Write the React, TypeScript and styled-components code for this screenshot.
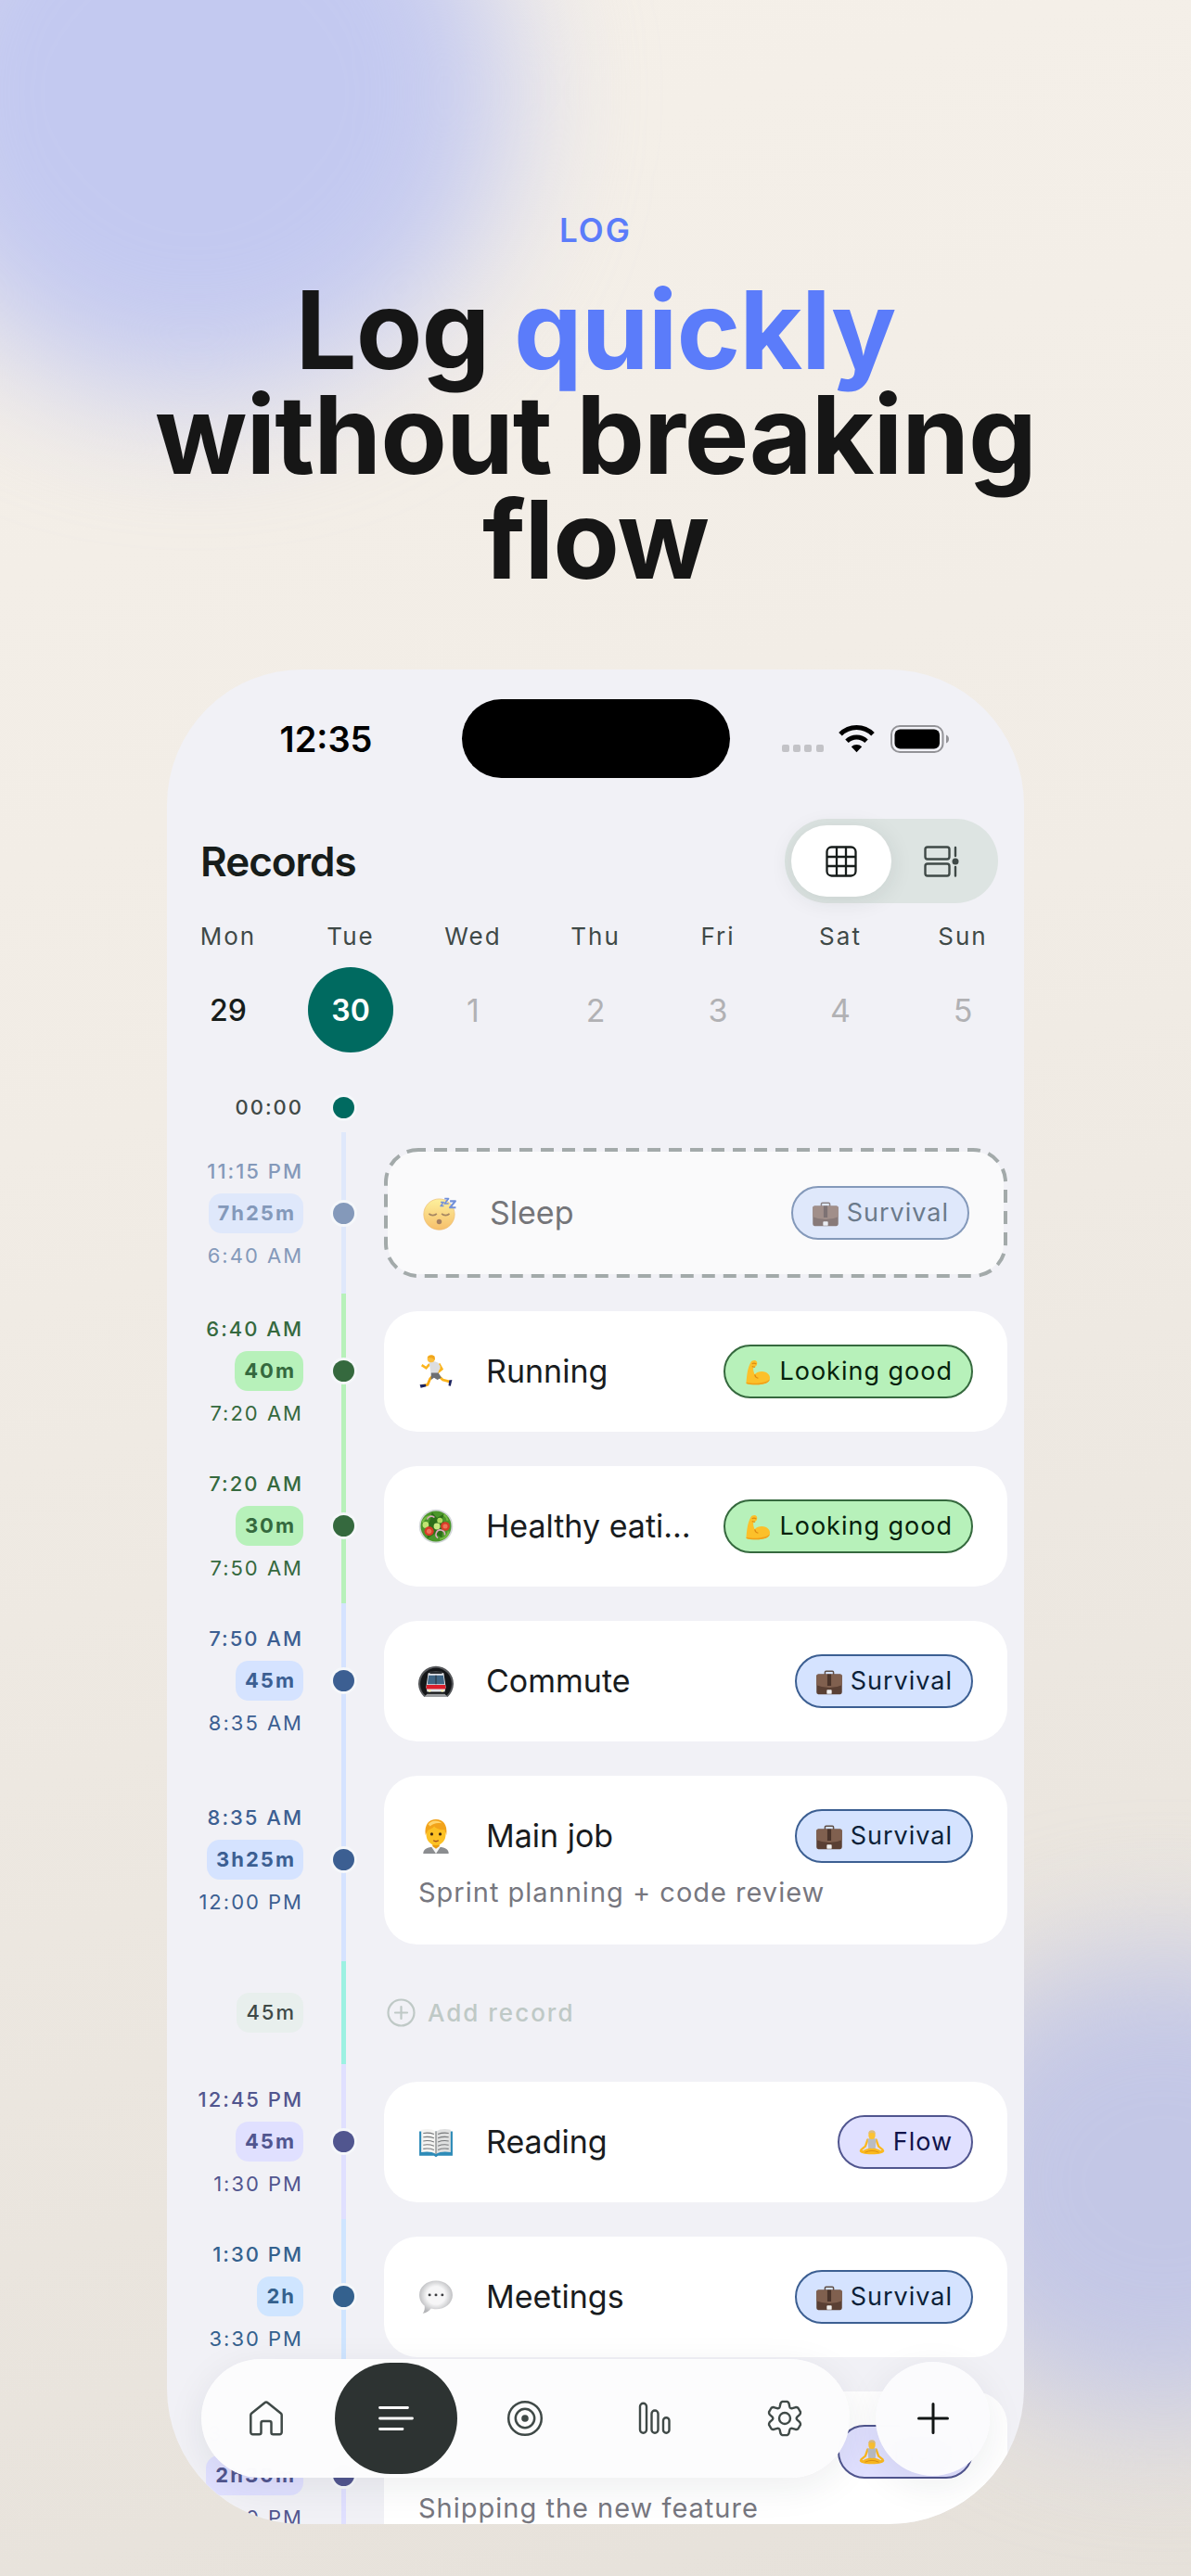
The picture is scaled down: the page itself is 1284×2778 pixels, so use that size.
import React from "react";
import styled, { createGlobalStyle } from "styled-components";

/* ---------- palettes ---------- */

type Palette = { soft: string; strong: string; ink: string };

const palettes: Record<string, Palette> = {
  faded: { soft: "#dfe8fb", strong: "#8499ba", ink: "#6b7a8b" },
  green: { soft: "#b7f1ba", strong: "#35693e", ink: "#05210b" },
  blue: { soft: "#d5e3ff", strong: "#3c5f92", ink: "#0b1f38" },
  violet: { soft: "#e0e0ff", strong: "#51568f", ink: "#10134a" },
  sky: { soft: "#cfe5ff", strong: "#34618e", ink: "#0b1f38" },
};

const GlobalStyle = createGlobalStyle`
  *, *::before, *::after { box-sizing: border-box; }
  body {
    margin: 0;
    font-family: Inter, "Liberation Sans", sans-serif;
    -webkit-font-smoothing: antialiased;
  }
  button { font: inherit; color: inherit; border: 0; padding: 0; background: none; cursor: pointer; }
  h1, h2, h3, p { margin: 0; }
`;

/* ---------- poster ---------- */

const Page = styled.main`
  position: relative;
  display: flex;
  flex-direction: column;
  align-items: center;
  height: 100vh;
  padding: 226px 0 56px;
  overflow: hidden;
  background: linear-gradient(165deg, #f5f0e9 0%, #f1ece5 40%, #e6e1da 100%);
`;

const Glow = styled.div<{ $corner: "top" | "bottom" }>`
  position: absolute;
  border-radius: 50%;
  filter: blur(70px);
  ${(p) =>
    p.$corner === "top"
      ? "width: 680px; height: 660px; left: -130px; top: -230px; background: #c3c9f0;"
      : "width: 540px; height: 500px; right: -240px; bottom: 175px; background: #c3c7e6;"}
`;

const Eyebrow = styled.p`
  position: relative;
  font-size: 35px;
  line-height: 44px;
  font-weight: 600;
  letter-spacing: 2px;
  color: #5b7cfa;
`;

const Headline = styled.h1`
  position: relative;
  width: 80%;
  margin-top: 29px;
  font-size: 117px;
  line-height: 113px;
  font-weight: 700;
  letter-spacing: -1px;
  text-align: center;
  color: #161616;
`;

const Accent = styled.span`
  color: #5b7cfa;
`;

/* ---------- phone ---------- */

const Phone = styled.section`
  position: relative;
  display: flex;
  flex-direction: column;
  flex: 1;
  min-height: 0;
  width: 72%;
  max-width: 924px;
  margin-top: 84px;
  border-radius: 146px;
  overflow: hidden;
  background: #f1f1f6;
`;

const StatusBar = styled.div`
  display: grid;
  grid-template-columns: 1fr auto 1fr;
  align-items: center;
  flex: none;
  padding-top: 32px;
`;

const Clock = styled.span`
  padding-right: 96px;
  font-size: 38px;
  line-height: 44px;
  font-weight: 600;
  text-align: right;
  color: #000;
`;

const Island = styled.div`
  width: 289px;
  height: 85px;
  border-radius: 43px;
  background: #000;
`;

const StatusIcons = styled.div`
  padding-left: 55px;
  svg { display: block; }
`;

const TitleBar = styled.header`
  display: flex;
  align-items: center;
  justify-content: space-between;
  flex: none;
  margin-top: 44px;
  padding: 0 28px 0 36px;
`;

const ScreenTitle = styled.h2`
  font-size: 44px;
  line-height: 52px;
  font-weight: 600;
  letter-spacing: -1px;
  color: #171d1b;
`;

const ViewSwitch = styled.div`
  display: flex;
  padding: 7px;
  border-radius: 46px;
  background: #dde4e2;
`;

const ViewButton = styled.button<{ $active?: boolean }>`
  display: grid;
  place-items: center;
  width: 108px;
  height: 77px;
  border-radius: 40px;
  color: ${(p) => (p.$active ? "#171d1b" : "#3f4947")};
  background: ${(p) => (p.$active ? "#fff" : "transparent")};
  box-shadow: ${(p) => (p.$active ? "0 4px 24px rgba(30, 50, 45, 0.1)" : "none")};
`;

const Week = styled.div`
  display: grid;
  grid-template-columns: repeat(7, 1fr);
  flex: none;
  margin-top: 20px;
`;

const Day = styled.button`
  display: flex;
  flex-direction: column;
  align-items: center;
  gap: 17px;
`;

const Weekday = styled.span`
  font-size: 26px;
  line-height: 32px;
  font-weight: 400;
  letter-spacing: 2px;
  color: #3f4947;
`;

type DayState = "past" | "selected" | "future";

const DayNumber = styled.span<{ $state: DayState }>`
  display: grid;
  place-items: center;
  width: 92px;
  height: 92px;
  border-radius: 50%;
  font-size: ${(p) => (p.$state === "future" ? 34 : 32)}px;
  font-weight: ${(p) => ({ past: 500, selected: 600, future: 400 })[p.$state]};
  color: ${(p) => ({ past: "#171d1b", selected: "#fff", future: "#b1b1b4" })[p.$state]};
  background: ${(p) => (p.$state === "selected" ? "#006a60" : "transparent")};
`;

/* ---------- timeline ---------- */

const Timeline = styled.div`
  flex: 1;
  min-height: 0;
  margin-top: 32px;
  overflow: hidden;
`;

const Row = styled.div<{ $height?: number }>`
  display: grid;
  grid-template-columns: 147px 87px 1fr;
  min-height: ${(p) => p.$height ?? 0}px;
  padding-right: 18px;
`;

const Times = styled.div<{ $color: string }>`
  display: flex;
  flex-direction: column;
  align-items: flex-end;
  justify-content: center;
  gap: 8px;
  font-size: 22px;
  line-height: 32px;
  letter-spacing: 2px;
  white-space: nowrap;
  color: ${(p) => p.$color};
`;

const Time = styled.span<{ $weight: number }>`
  font-weight: ${(p) => p.$weight};
`;

const Duration = styled.span<{ $bg: string; $weight?: number }>`
  padding: 0 8px 0 10px;
  border-radius: 14px;
  line-height: 43px;
  font-weight: ${(p) => p.$weight ?? 700};
  background: ${(p) => p.$bg};
`;

const Rail = styled.div`
  display: grid;
  place-items: center;
  & > * { grid-area: 1 / 1; }
`;

const RailLine = styled.i<{ $color: string }>`
  width: 5px;
  height: 100%;
  background: ${(p) => p.$color};
`;

const RailDot = styled.i<{ $color: string }>`
  width: 23px;
  height: 23px;
  border-radius: 50%;
  background: ${(p) => p.$color};
  box-shadow: 0 0 0 3px #f5f7fa;
`;

const Card = styled.article<{ $planned?: boolean }>`
  display: flex;
  flex-direction: column;
  justify-content: center;
  min-width: 0;
  border-radius: 36px;
  ${(p) =>
    p.$planned
      ? `
    position: relative;
    margin: 17px 0;
    padding: 37px;
    border: 4px solid transparent;
    background: #fafafb padding-box;
  `
      : `
    margin: 19px 0 18px;
    padding: 36px 37px;
    background: #fff;
  `}
`;

const DashedFrame = styled.svg`
  position: absolute;
  inset: -4px;
  width: calc(100% + 8px);
  height: calc(100% + 8px);
`;

const FrameRect = styled.rect`
  x: 2px;
  y: 2px;
  width: calc(100% - 4px);
  height: calc(100% - 4px);
  rx: 35px;
  fill: none;
  stroke: #a3aaaa;
  stroke-width: 4px;
  stroke-dasharray: 14 9;
  stroke-dashoffset: 6px;
`;

const CardHead = styled.div`
  display: flex;
  align-items: center;
  height: 58px;
  svg { flex: none; }
`;

const CardTitle = styled.h3<{ $muted?: boolean }>`
  flex: 1;
  min-width: 0;
  margin: 0 28px 0 35px;
  font-size: 34px;
  line-height: 44px;
  font-weight: 400;
  color: ${(p) => (p.$muted ? "#747579" : "#191c1e")};
  white-space: nowrap;
  overflow: hidden;
  text-overflow: ellipsis;
`;

const Badge = styled.span<{ $palette: Palette }>`
  display: flex;
  align-items: center;
  gap: 8px;
  height: 58px;
  padding: 0 20px;
  border: 2px solid ${(p) => p.$palette.strong};
  border-radius: 29px;
  font-size: 27px;
  line-height: 32px;
  letter-spacing: 1px;
  white-space: nowrap;
  color: ${(p) => p.$palette.ink};
  background: ${(p) => p.$palette.soft};
`;

const Note = styled.p`
  margin-top: 12px;
  font-size: 29px;
  line-height: 40px;
  letter-spacing: 1px;
  color: #77777f;
`;

const AddButton = styled.button`
  display: flex;
  align-items: center;
  justify-self: start;
  gap: 13px;
  margin-left: 3px;
  font-size: 26px;
  line-height: 32px;
  font-weight: 500;
  letter-spacing: 2px;
  color: #bfc9c6;
`;

/* ---------- bottom bar ---------- */

const BottomBar = styled.div`
  position: absolute;
  left: 37px;
  right: 37px;
  bottom: 50px;
  display: flex;
  align-items: center;
  gap: 28px;
`;

const Tabs = styled.nav`
  display: grid;
  grid-template-columns: repeat(5, 1fr);
  flex: 1;
  height: 128px;
  padding: 4px 0;
  border-radius: 64px;
  background: rgba(252, 252, 253, 0.98);
  backdrop-filter: blur(20px);
  box-shadow: 0 10px 40px rgba(30, 40, 50, 0.08);
`;

const Tab = styled.button<{ $active?: boolean }>`
  display: grid;
  place-items: center;
  margin: 0 4px;
  border-radius: 60px;
  color: ${(p) => (p.$active ? "#fff" : "#3f4947")};
  background: ${(p) => (p.$active ? "#2d3332" : "transparent")};
`;

const AddFab = styled.button`
  display: grid;
  place-items: center;
  width: 123px;
  height: 123px;
  border-radius: 50%;
  color: #111514;
  background: rgba(251, 251, 253, 0.98);
  backdrop-filter: blur(20px);
  box-shadow: 0 10px 40px rgba(30, 40, 50, 0.08);
`;

/* ---------- line icons ---------- */

const line = { fill: "none", stroke: "currentColor", strokeLinecap: "round", strokeLinejoin: "round" } as const;

const GridIcon = () => (
  <svg width="34" height="34" viewBox="0 0 34 34" {...line} strokeWidth="2.3">
    <rect x="1.5" y="1.5" width="31" height="31" rx="5" />
    <path d="M12 2v30M22 2v30M2 12h30M2 22h30" />
  </svg>
);

const BoardIcon = () => (
  <svg width="38" height="34" viewBox="0 0 38 34" {...line} strokeWidth="2.4">
    <rect x="1.5" y="1.5" width="26" height="13" rx="2.5" />
    <rect x="1.5" y="19.5" width="26" height="13" rx="2.5" />
    <path d="M34 2v9M34 23v9.500" />
    <circle cx="34" cy="17" r="3.500" fill="currentColor" stroke="none" />
  </svg>
);

const HomeIcon = () => (
  <svg width="38" height="38" viewBox="0 0 38 38" {...line} strokeWidth="2.500">
    <path d="M17.300 2.200a2.600 2.600 0 0 1 3.400 0l14 11.200a2.600 2.600 0 0 1 1 2.100v18.500a2.200 2.200 0 0 1-2.200 2.200h-7a2 2 0 0 1-2-2V24a2 2 0 0 0-2-2h-7a2 2 0 0 0-2 2v10.200a2 2 0 0 1-2 2h-7A2.200 2.200 0 0 1 2.300 34V15.500a2.600 2.600 0 0 1 1-2.100z" />
  </svg>
);

const ListIcon = () => (
  <svg width="38" height="28" viewBox="0 0 38 28" {...line} strokeWidth="2.800">
    <path d="M1.500 2.500h30M1.500 14h35M1.500 25.500h24.500" />
  </svg>
);

const TargetIcon = () => (
  <svg width="40" height="40" viewBox="0 0 40 40" {...line} strokeWidth="2.500">
    <circle cx="20" cy="20" r="17.800" />
    <circle cx="20" cy="20" r="10.200" />
    <circle cx="20" cy="20" r="3.800" fill="currentColor" stroke="none" />
  </svg>
);

const BarsIcon = () => (
  <svg width="36" height="36" viewBox="0 0 36 36" {...line} strokeWidth="2.400">
    <rect x="2" y="1.700" width="7" height="32" rx="3.500" />
    <rect x="14.500" y="9.500" width="7" height="24.200" rx="3.500" />
    <rect x="27" y="17.200" width="6.500" height="16.500" rx="3.200" />
  </svg>
);

const gearPath = (() => {
  const pts: string[] = [];
  const teeth = 6;
  for (let i = 0; i < teeth; i++) {
    const a = (i * 2 * Math.PI) / teeth - Math.PI / 2;
    const at = (r: number, d: number) =>
      `${(20 + r * Math.cos(a + d)).toFixed(2)} ${(20 + r * Math.sin(a + d)).toFixed(2)}`;
    pts.push(`${i ? "L" : "M"}${at(13.600, -0.400)}L${at(16.800, -0.270)}Q${at(18, -0.220)} ${at(18.300, -0.140)}L${at(18.300, 0.140)}Q${at(18, 0.220)} ${at(16.800, 0.270)}L${at(13.600, 0.400)}Q${at(11.800, 0.523)} ${at(13.600, 0.647)}`);
  }
  return pts.join("") + "Z";
})();

const GearIcon = () => (
  <svg width="40" height="40" viewBox="0 0 40 40" {...line} strokeWidth="2.400">
    <path d={gearPath} />
    <circle cx="20" cy="20" r="6" />
  </svg>
);

const PlusIcon = () => (
  <svg width="34" height="34" viewBox="0 0 34 34" {...line} strokeWidth="3">
    <path d="M17 1.500v31M1.500 17h31" />
  </svg>
);

const PlusCircleIcon = () => (
  <svg width="31" height="31" viewBox="0 0 31 31" {...line} strokeWidth="2.200">
    <circle cx="15.500" cy="15.500" r="14" />
    <path d="M15.500 9v13M9 15.500h13" />
  </svg>
);

const SystemIcons = () => (
  <svg width="182" height="32" viewBox="0 0 182 32">
    <g fill="#c3c3c7">
      <rect x="1" y="22" width="8" height="8" rx="2" />
      <rect x="13" y="22" width="8" height="8" rx="2" />
      <rect x="25" y="22" width="8" height="8" rx="2" />
      <rect x="38" y="22" width="8" height="8" rx="2" />
    </g>
    <g fill="none" stroke="#000" strokeWidth="5">
      <path d="M64 10.800a24.500 24.500 0 0 1 35 0" />
      <path d="M71 18.200a15 15 0 0 1 21 0" />
    </g>
    <path d="M75.800 24.300a8.500 8.500 0 0 1 11.400 0l-5.700 6z" fill="#000" />
    <rect x="119" y="2" width="55.500" height="28" rx="9" fill="none" stroke="#939397" strokeWidth="2" />
    <rect x="122.500" y="5.500" width="48.500" height="21" rx="6" fill="#000" />
    <path d="M178 11.500c4 1.500 4 7.500 0 9z" fill="#939397" />
  </svg>
);

/* ---------- pictograms ---------- */

const Pic = ({ size = 38, dim, children }: { size?: number; dim?: boolean; children: React.ReactNode }) => (
  <svg width={size} height={size} viewBox="0 0 36 36" opacity={dim ? 0.65 : 1}>
    {children}
  </svg>
);

const SleepPic = () => (
  <Pic dim>
    <defs>
      <linearGradient id="face" x1="0" y1="0" x2="0" y2="1">
        <stop offset="0" stopColor="#ffec6b" />
        <stop offset="1" stopColor="#f5a01e" />
      </linearGradient>
    </defs>
    <circle cx="17.500" cy="19.500" r="15.800" fill="url(#face)" stroke="#e2951f" strokeWidth="0.600" />
    <path d="M7 18.800c2 2.200 6 2.200 8 0M20 18.800c2 2.200 6 2.200 8 0" fill="none" stroke="#7a4a10" strokeWidth="1.500" />
    <circle cx="17.500" cy="27" r="2.600" fill="#7a3f10" />
    <g fill="none" strokeLinejoin="round">
      <path d="M19 7h3l-3 4h3.200" stroke="#2a58c8" strokeWidth="1.400" />
      <path d="M23 3.500h4l-4 5h4.200" stroke="#2a58c8" strokeWidth="1.600" />
      <path d="M28.500 6h5.500l-5.500 6.500h6" stroke="#2a58c8" strokeWidth="2" />
    </g>
  </Pic>
);

const RunPic = () => (
  <Pic>
    <path d="M16 21l-4 4.500-2.500 6-5.500 1" fill="none" stroke="#f9a90c" strokeWidth="2.600" />
    <path d="M20 22l5 4.500 7.500 2" fill="none" stroke="#fbb41c" strokeWidth="2.600" />
    <path d="M11.500 10.500l-3.500 4-4.500-3" fill="none" stroke="#fbb41c" strokeWidth="2.400" />
    <path d="M21 10l3 5.500-5 4" fill="none" stroke="#fbb41c" strokeWidth="2.600" />
    <path d="M11 9q4-3 9 0l2.500 4-3 8h-6.500z" fill="#dcdde0" />
    <path d="M13 19.500h7.500l3 5-4 2-3.500-2-3 2z" fill="#6d6f73" />
    <circle cx="13" cy="5" r="3.800" fill="#fbbd3a" />
    <path d="M9 3.800q3-4 7.500-1.500l.5 4-3-2z" fill="#f0a51c" />
    <path d="M1.500 31.500l6-.5.500 2.500-5.500 1.200zM31.500 27l3-.5-1.500 6.500-2.200-.5z" fill="#1c2460" />
  </Pic>
);

const SaladPic = () => (
  <Pic>
    <circle cx="18" cy="18" r="17.300" fill="#d3d7da" />
    <circle cx="18" cy="18" r="15.600" fill="#4b962b" />
    <path d="M14 3.500l5 6 7-4-2 7 7 4-6 3-1 10-7-4-8 5 1-9-6-5 7-2z" fill="#2c6f19" />
    <path d="M4 14q4-7 9-6M22 31q8-1 9-8M26 6q3 2 4 6" fill="none" stroke="#76bb43" strokeWidth="2" />
    <circle cx="7.500" cy="16.500" r="3.200" fill="#bfe573" />
    <circle cx="19" cy="18" r="3.300" fill="#c8ea80" />
    <circle cx="22" cy="12" r="2.800" fill="#b0dc62" />
    <circle cx="11" cy="23" r="4.800" fill="#d93c28" />
    <circle cx="11" cy="23" r="2.500" fill="#ee7458" />
    <circle cx="27.500" cy="18" r="4.600" fill="#d93c28" />
    <circle cx="27.500" cy="18" r="2.400" fill="#ee7458" />
    <path d="M9 11a4.500 4.500 0 0 1 7.500-2M20 30a4.500 4.500 0 1 1 7-3" fill="none" stroke="#dcaabf" strokeWidth="1.500" />
  </Pic>
);

const MetroPic = () => (
  <Pic>
    <path d="M6 34A18 18 0 1 1 30 34z" fill="#55575a" />
    <path d="M7.500 33A16 16.200 0 1 1 28.500 33z" fill="#141618" />
    <path d="M6 34l3-3h18l3 3z" fill="#9b9da0" />
    <path d="M10 10q8-4 16 0l2 14-1 5H9l-1-5z" fill="#e4e5e8" />
    <rect x="11.500" y="7.800" width="13" height="2.600" rx="1" fill="#2c2f32" />
    <path d="M10.500 12h15l1.200 9H9.300z" fill="#3f6584" />
    <path d="M18 12v9" stroke="#27323c" strokeWidth="1" />
    <path d="M8.500 21.800h19l.5 4.200H8z" fill="#db1f2c" />
    <circle cx="11.500" cy="27.800" r="1.300" fill="#f5efb0" />
    <circle cx="24.500" cy="27.800" r="1.300" fill="#f5efb0" />
  </Pic>
);

const WorkerPic = () => (
  <Pic>
    <path d="M5 36c0-5 5-7 13-7s13 2 13 7z" fill="#8b8d90" />
    <path d="M13 28.500h10L18 36z" fill="#f6f7f8" />
    <path d="M14.500 24h7v4.500L18 31l-3.500-2.500z" fill="#e99a0c" />
    <ellipse cx="18" cy="16" rx="10" ry="11.500" fill="#fcc125" />
    <path d="M7.300 17C6 6 11 1 18 1s12 5 10.700 16l-2-5.500c-5 .5-9-1.500-10.500-3.500-1 2-4.500 3-6.500 4z" fill="#f2a31b" />
    <path d="M10 6c3-4 10-5 14-1-5-1-9 0-12 3z" fill="#ffd56e" />
    <circle cx="13.700" cy="16" r="1.500" fill="#3b2410" />
    <circle cx="22.300" cy="16" r="1.500" fill="#3b2410" />
    <path d="M15.300 22.500q2.700 1.800 5.400 0" fill="none" stroke="#a4501c" strokeWidth="1.300" />
  </Pic>
);

const BookPic = () => (
  <Pic>
    <path d="M1 7h34v25H20l-2 1.500L16 32H1z" fill="#2d8bb8" />
    <path d="M3 5.500q9-2 15 1.500v23q-6-3-15-1.500z" fill="#f4f4f2" />
    <path d="M33 5.500q-9-2-15 1.500v23q6-3 15-1.500z" fill="#dfe0e0" />
    <path d="M18 7v23" stroke="#85888a" strokeWidth="1.200" />
    <path d="M5 9q6-1 11 1M5 13q6-1 11 1M5 17q6-1 11 1M5 21q6-1 11 1M5 25q6-1 11 1M31 9q-6-1-11 1M31 13q-6-1-11 1M31 17q-6-1-11 1M31 21q-6-1-11 1M31 25q-6-1-11 1" fill="none" stroke="#77797b" strokeWidth="1" />
  </Pic>
);

const SpeechPic = () => (
  <Pic>
    <defs>
      <radialGradient id="bubble" cx="0.5" cy="0.45" r="0.55">
        <stop offset="0.5" stopColor="#f6f6f7" />
        <stop offset="1" stopColor="#b4b5b8" />
      </radialGradient>
    </defs>
    <path d="M18 1.500c9.500 0 17 6.300 17 14.500s-7.500 14.500-17 14.500c-2 0-3.500-.3-5-.7-2 2.500-5 4.700-8.500 4.900 1.800-1.800 2.300-4.900 1.800-7.700C3 24.500 1 20.300 1 16 1 7.800 8.500 1.500 18 1.500z" fill="url(#bubble)" />
    <g fill="#3d3f42">
      <circle cx="11.500" cy="16" r="1.400" />
      <circle cx="18" cy="16" r="1.400" />
      <circle cx="24.500" cy="16" r="1.400" />
    </g>
  </Pic>
);

const CasePic = ({ dim }: { dim?: boolean }) => (
  <Pic size={30} dim={dim}>
    <path d="M12.500 10V6.500q0-1.500 1.500-1.500h8q1.500 0 1.500 1.500V10" fill="none" stroke="#5f5048" strokeWidth="1.800" />
    <rect x="1.500" y="9" width="33" height="26" rx="2.500" fill="#5a4034" />
    <path d="M1.500 11.500q0-2.500 2.500-2.500h28q2.500 0 2.500 2.500V23q-16 7-33 0z" fill="#80604f" />
    <rect x="15.500" y="9" width="5" height="15" fill="#4a342b" />
    <rect x="14.800" y="29" width="6.400" height="5.500" rx="1" fill="#f1f1f1" />
  </Pic>
);

const FlexPic = () => (
  <Pic size={30}>
    <path d="M9 6c1.500-2.800 6-3.200 7.500-.8 1.200 2 .7 4.800-1.200 6.300l-3 1.200c-.5 3.500.2 6 1.700 9.300 3.200-4 9.500-5 14-3 5 2.200 6.700 6.700 5 10.200-2.800 5-10 6-16.500 6-5.500 0-9.500-.3-13.500-1.700C3.500 26.500 4 14.500 9 6z" fill="#fcc02a" />
    <path d="M14 22c.5 2.500 2.200 4.200 4.500 4.700M10.500 8c2-1 3.500-1 5.500.5M10.500 11.500q2 1.200 4 .7" fill="none" stroke="#dc8a10" strokeWidth="1.400" />
    <path d="M3.200 32c6 1.600 11.800 1.500 16.500 1 6.800-.7 11.800-2.300 13.700-5 0 4.500-7 7.200-17.200 7.200-5 0-9-.5-13-1.700z" fill="#f0a01a" />
  </Pic>
);

const LotusPic = () => (
  <Pic size={30}>
    <path d="M12.500 15l-3 8.500-5.500 4.500M23.500 15l3 8.500 5.500 4.500" fill="none" stroke="#fbb91f" strokeWidth="2.800" strokeLinecap="round" />
    <path d="M12.500 14q5.500-2.500 11 0L22.500 27h-9z" fill="#b9bcc2" />
    <path d="M2 29c1-1.500 3-1 4.500 0 4-2 7.500-3.500 11.500-2.500 4-1 7.500.5 11.500 2.500 1.500-1 3.500-1.500 4.500 0 0 3-6 5-16 5S2 32 2 29z" fill="#fbb91f" />
    <path d="M9 31.500q9-4.500 18 0" fill="none" stroke="#dc8f12" strokeWidth="1.200" />
    <ellipse cx="18" cy="9" rx="4.400" ry="5.400" fill="#fcc233" />
    <path d="M13.500 7.500Q13.300 2.800 18 2.800t4.500 4.700Q18 4.500 13.500 7.500z" fill="#e0bd78" />
  </Pic>
);

/* ---------- data ---------- */

const week: { name: string; day: number; state: DayState }[] = [
  { name: "Mon", day: 29, state: "past" },
  { name: "Tue", day: 30, state: "selected" },
  { name: "Wed", day: 1, state: "future" },
  { name: "Thu", day: 2, state: "future" },
  { name: "Fri", day: 3, state: "future" },
  { name: "Sat", day: 4, state: "future" },
  { name: "Sun", day: 5, state: "future" },
];

type Entry = {
  start: string;
  length: string;
  end: string;
  tone: string;
  icon?: React.ReactNode;
  title?: string;
  badge: "Survival" | "Looking good" | "Flow";
  note?: string;
  planned?: boolean;
};

const morning: Entry[] = [
  { start: "11:15 PM", length: "7h25m", end: "6:40 AM", tone: "faded", icon: <SleepPic />, title: "Sleep", badge: "Survival", planned: true },
  { start: "6:40 AM", length: "40m", end: "7:20 AM", tone: "green", icon: <RunPic />, title: "Running", badge: "Looking good" },
  { start: "7:20 AM", length: "30m", end: "7:50 AM", tone: "green", icon: <SaladPic />, title: "Healthy eating", badge: "Looking good" },
  { start: "7:50 AM", length: "45m", end: "8:35 AM", tone: "blue", icon: <MetroPic />, title: "Commute", badge: "Survival" },
  { start: "8:35 AM", length: "3h25m", end: "12:00 PM", tone: "blue", icon: <WorkerPic />, title: "Main job", badge: "Survival", note: "Sprint planning + code review" },
];

const afternoon: Entry[] = [
  { start: "12:45 PM", length: "45m", end: "1:30 PM", tone: "violet", icon: <BookPic />, title: "Reading", badge: "Flow" },
  { start: "1:30 PM", length: "2h", end: "3:30 PM", tone: "sky", icon: <SpeechPic />, title: "Meetings", badge: "Survival" },
  { start: "3:30 PM", length: "2h30m", end: "6:00 PM", tone: "violet", badge: "Flow", note: "Shipping the new feature" },
];

const badgeTone = { Survival: "blue", "Looking good": "green", Flow: "violet" } as const;

const BadgePic = ({ kind, dim }: { kind: Entry["badge"]; dim?: boolean }) => {
  if (kind === "Survival") return <CasePic dim={dim} />;
  if (kind === "Flow") return <LotusPic />;
  return <FlexPic />;
};

const Record = ({ entry }: { entry: Entry }) => {
  const tone = palettes[entry.tone];
  const badge = entry.planned ? palettes.faded : palettes[badgeTone[entry.badge]];
  return (
    <Row>
      <Times $color={tone.strong}>
        <Time $weight={500}>{entry.start}</Time>
        <Duration $bg={tone.soft}>{entry.length}</Duration>
        <Time $weight={400}>{entry.end}</Time>
      </Times>
      <Rail>
        <RailLine $color={tone.soft} />
        <RailDot $color={tone.strong} />
      </Rail>
      <Card $planned={entry.planned}>
        {entry.planned && (
          <DashedFrame aria-hidden="true">
            <FrameRect />
          </DashedFrame>
        )}
        <CardHead>
          {entry.icon}
          <CardTitle $muted={entry.planned}>{entry.title}</CardTitle>
          <Badge $palette={badge}>
            <BadgePic kind={entry.badge} dim={entry.planned} />
            {entry.badge}
          </Badge>
        </CardHead>
        {entry.note && <Note>{entry.note}</Note>}
      </Card>
    </Row>
  );
};

export default function App() {
  return (
    <Page>
      <GlobalStyle />
      <Glow $corner="top" />
      <Glow $corner="bottom" />
      <Eyebrow>LOG</Eyebrow>
      <Headline>
        Log <Accent>quickly</Accent> without breaking flow
      </Headline>
      <Phone>
        <StatusBar>
          <Clock>12:35</Clock>
          <Island />
          <StatusIcons>
            <SystemIcons />
          </StatusIcons>
        </StatusBar>
        <TitleBar>
          <ScreenTitle>Records</ScreenTitle>
          <ViewSwitch>
            <ViewButton $active aria-label="Grid view">
              <GridIcon />
            </ViewButton>
            <ViewButton aria-label="Timeline view">
              <BoardIcon />
            </ViewButton>
          </ViewSwitch>
        </TitleBar>
        <Week>
          {week.map((d) => (
            <Day key={d.name}>
              <Weekday>{d.name}</Weekday>
              <DayNumber $state={d.state}>{d.day}</DayNumber>
            </Day>
          ))}
        </Week>
        <Timeline>
          <Row $height={54}>
            <Times $color="#3f4947">
              <Time $weight={500}>00:00</Time>
            </Times>
            <Rail>
              <RailDot $color="#006a60" />
            </Rail>
          </Row>
          {morning.map((e) => (
            <Record key={e.start} entry={e} />
          ))}
          <Row $height={111}>
            <Times $color="#3f4947">
              <Duration $bg="#e8efed" $weight={500}>45m</Duration>
            </Times>
            <Rail>
              <RailLine $color="#9cf1e2" />
            </Rail>
            <AddButton>
              <PlusCircleIcon />
              Add record
            </AddButton>
          </Row>
          {afternoon.map((e) => (
            <Record key={e.start} entry={e} />
          ))}
        </Timeline>
        <BottomBar>
          <Tabs>
            <Tab aria-label="Home"><HomeIcon /></Tab>
            <Tab $active aria-label="Records"><ListIcon /></Tab>
            <Tab aria-label="Goals"><TargetIcon /></Tab>
            <Tab aria-label="Statistics"><BarsIcon /></Tab>
            <Tab aria-label="Settings"><GearIcon /></Tab>
          </Tabs>
          <AddFab aria-label="Add"><PlusIcon /></AddFab>
        </BottomBar>
      </Phone>
    </Page>
  );
}
